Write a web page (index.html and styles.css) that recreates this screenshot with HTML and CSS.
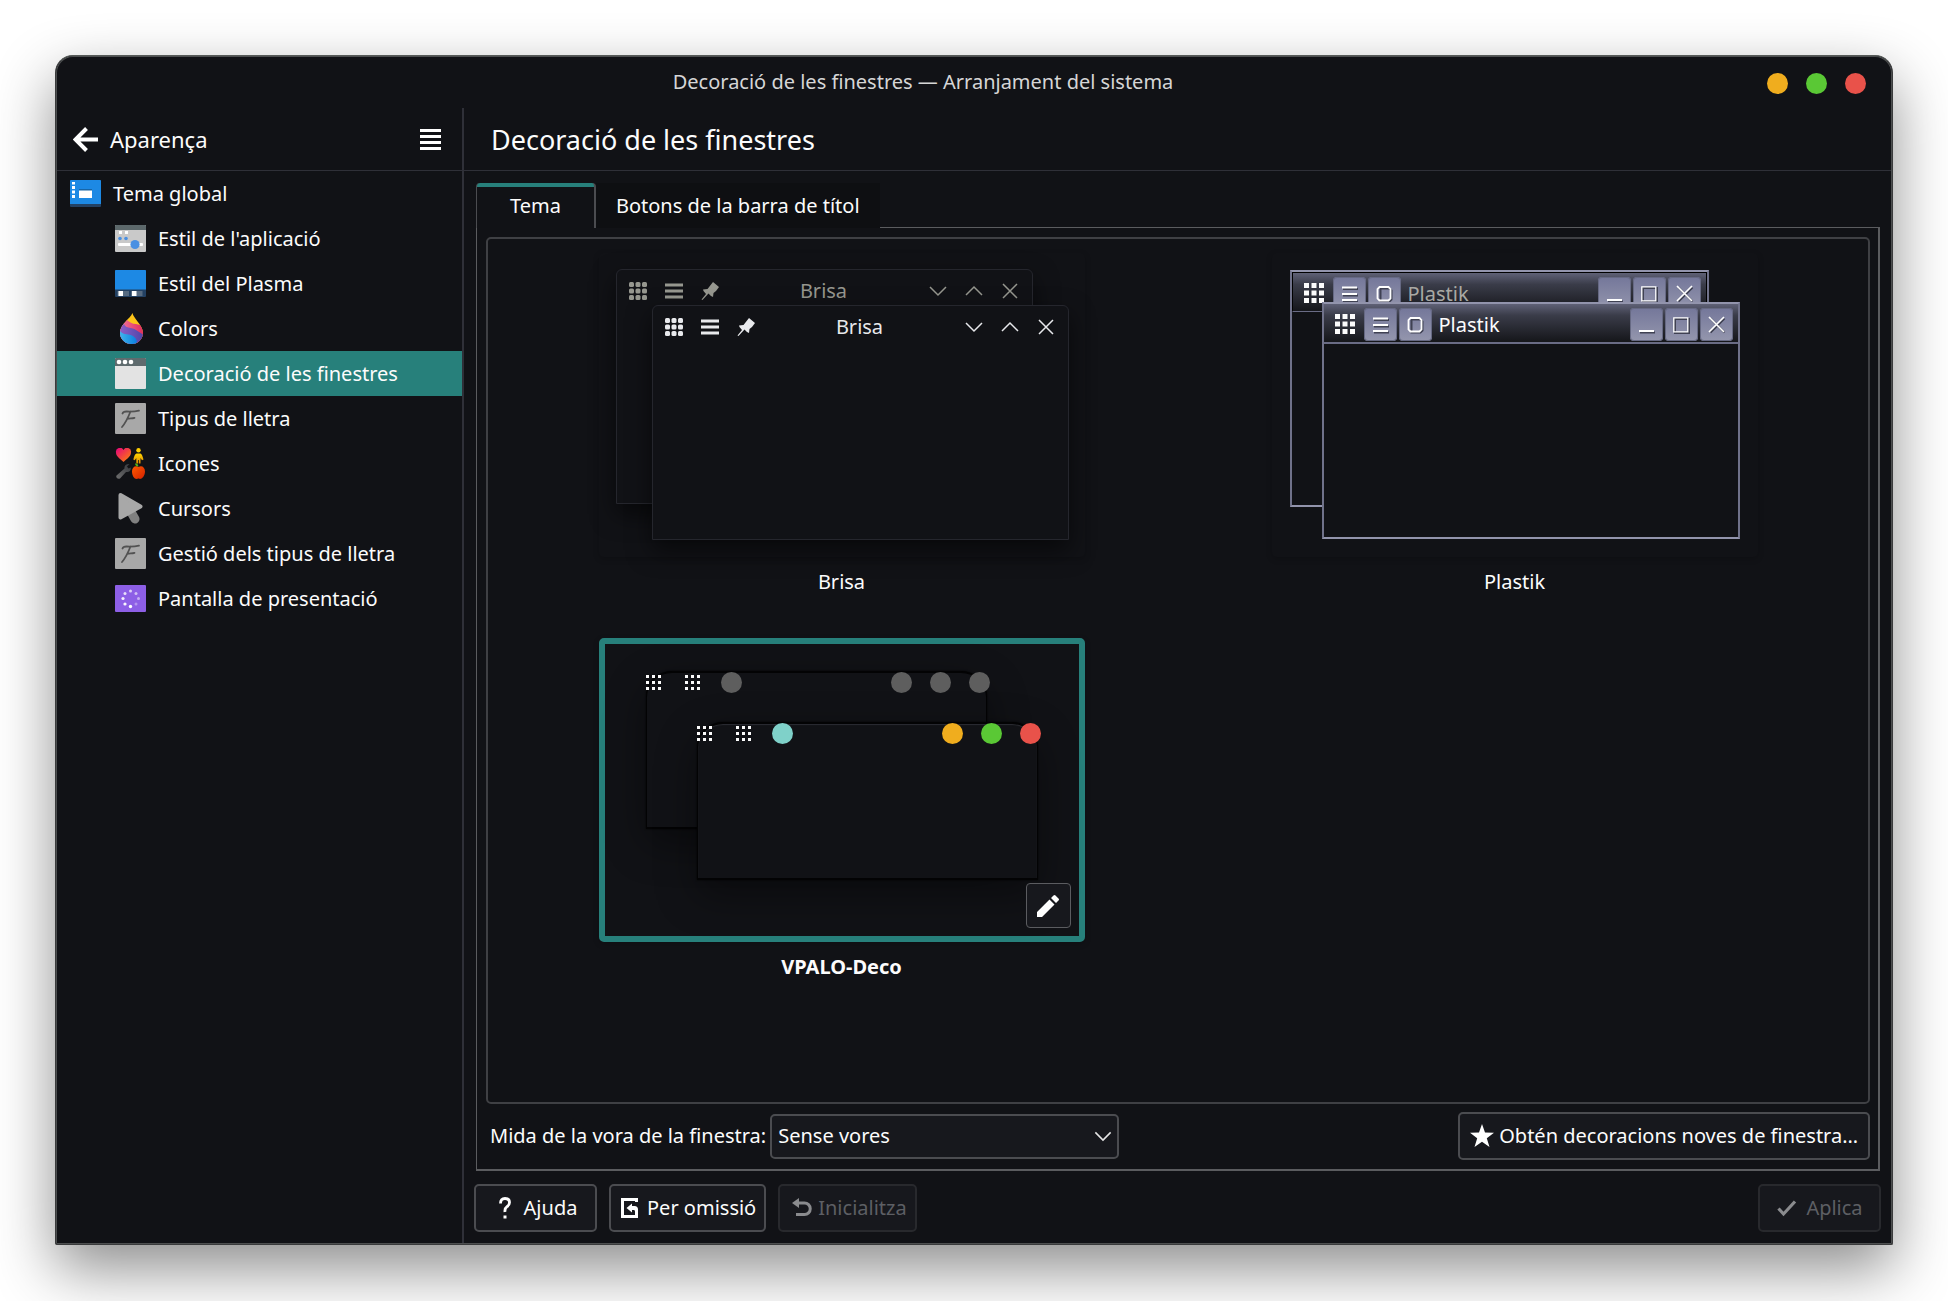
FILE: index.html
```html
<!DOCTYPE html>
<html lang="ca">
<head>
<meta charset="utf-8">
<title>Decoració de les finestres — Arranjament del sistema</title>
<meta name="viewport" content="width=device-width, initial-scale=1">
<link rel="stylesheet" href="styles.css">
</head>
<body>
<svg class="sprite" aria-hidden="true">
  <defs>
    <linearGradient id="g-heart" x1="0" y1="0" x2="1" y2="1"><stop offset="0" stop-color="#e6007e"/><stop offset="1" stop-color="#ff8a00"/></linearGradient>
    <linearGradient id="g-person" x1="0" y1="0" x2="0" y2="1"><stop offset="0" stop-color="#ffd500"/><stop offset="1" stop-color="#e08a00"/></linearGradient>
    <linearGradient id="g-wrench" x1="0" y1="1" x2="1" y2="0"><stop offset="0" stop-color="#6e6e6e"/><stop offset="1" stop-color="#33353a"/></linearGradient>
    <linearGradient id="g-apple" x1="0" y1="0" x2="1" y2="1"><stop offset="0" stop-color="#ff5a00"/><stop offset="1" stop-color="#d32000"/></linearGradient>
    <linearGradient id="g-blue" x1="0" y1="0" x2="1" y2="0"><stop offset="0" stop-color="#4fc3ee"/><stop offset="1" stop-color="#0a7fe0"/></linearGradient>
    <linearGradient id="g-violet" x1="0" y1="0" x2="1" y2="0"><stop offset="0" stop-color="#9a63cf"/><stop offset="1" stop-color="#4b45a6"/></linearGradient>
    <linearGradient id="g-pink" x1="0" y1="0" x2="1" y2="0"><stop offset="0" stop-color="#f285a8"/><stop offset="1" stop-color="#e02a5c"/></linearGradient>
    <clipPath id="c-drop"><path d="M17.500 0C18 5 28 12 28 20a11.500 11 0 0 1-23 0C5 11 15 6 17.500 0z"/></clipPath>
  </defs>
  <symbol id="i-font" viewBox="0 0 31 31">
    <rect width="31" height="31" rx="1" fill="#a8a8a8"/>
    <path d="M7.500 10.500c.5-1.500 2-2 4-2 4 .2 8 .2 12.500-.8M15.500 8.500c-2 5-4.500 11-8.500 15.500M12 16c3-1 4.500-.3 7.500-1.200" fill="none" stroke="#525252" stroke-width="1.800" stroke-linecap="round"/>
  </symbol>
  <symbol id="i-grid" viewBox="0 0 20 20"><path d="M0 0h5v5H0zM7.500 0h5v5h-5zM15 0h5v5h-5zM0 7.500h5v5H0zM7.500 7.500h5v5h-5zM15 7.500h5v5h-5zM0 15h5v5H0zM7.500 15h5v5h-5zM15 15h5v5h-5z" fill="currentColor"/></symbol>
  <symbol id="i-softgrid" viewBox="0 0 20 20"><g fill="currentColor"><rect x="1" y="1" width="5" height="5" rx="1.500"/><rect x="7.500" y="1" width="5" height="5" rx="1.500"/><rect x="14" y="1" width="5" height="5" rx="1.500"/><rect x="1" y="7.500" width="5" height="5" rx="1.500"/><rect x="7.500" y="7.500" width="5" height="5" rx="1.500"/><rect x="14" y="7.500" width="5" height="5" rx="1.500"/><rect x="1" y="14" width="5" height="5" rx="1.500"/><rect x="7.500" y="14" width="5" height="5" rx="1.500"/><rect x="14" y="14" width="5" height="5" rx="1.500"/></g></symbol>
  <symbol id="i-minigrid" viewBox="0 0 15 15"><path d="M0 0h3v3H0zM6 0h3v3H6zM12 0h3v3h-3zM0 6h3v3H0zM6 6h3v3H6zM12 6h3v3h-3zM0 12h3v3H0zM6 12h3v3H6zM12 12h3v3h-3z" fill="currentColor"/></symbol>
  <symbol id="i-bars" viewBox="0 0 20 20"><path d="M1 2.500h18v3H1zM1 8.500h18v3H1zM1 14.500h18v3H1z" fill="currentColor"/></symbol>
  <symbol id="i-pin" viewBox="0 0 20 20"><path d="M13 1l6 5-3 4-2.500 2-.5 4-2-1-2.500-2.500L2.500 19 1.500 18.500 6 13 3.500 10 3 8.500l4.500-.5z" fill="currentColor"/></symbol>
  <symbol id="i-down" viewBox="0 0 20 20"><path d="M2 6l8 8 8-8" fill="none" stroke="currentColor" stroke-width="1.500"/></symbol>
  <symbol id="i-up" viewBox="0 0 20 20"><path d="M2 14l8-8 8 8" fill="none" stroke="currentColor" stroke-width="1.500"/></symbol>
  <symbol id="i-close" viewBox="0 0 20 20"><path d="M3 3l14 14M17 3L3 17" fill="none" stroke="currentColor" stroke-width="1.500"/></symbol>
  <symbol id="p-menu" viewBox="0 0 33 33"><path d="M10 12h15M10 18.500h15M10 24.500h15" stroke="#3f4152" stroke-width="2"/><path d="M9 10.500h15M9 17h15M9 23h15" stroke="#fff" stroke-width="2"/></symbol>
  <symbol id="p-all" viewBox="0 0 33 33"><path d="M12.500 11.500h9l2 2v9l-2 2h-9z" fill="none" stroke="#3f4152" stroke-width="2"/><path d="M11.500 10h9l2 2v9.500l-2 2h-9l-2-2V12z" fill="none" stroke="#fff" stroke-width="1.800"/></symbol>
  <symbol id="p-min" viewBox="0 0 33 33"><path d="M10 24.500h15" stroke="#3f4152" stroke-width="2"/><path d="M9 23h15" stroke="#fff" stroke-width="2"/></symbol>
  <symbol id="p-max" viewBox="0 0 33 33"><path d="M10 11h14v14H10z" fill="none" stroke="#3f4152" stroke-width="2"/><path d="M8.800 9.800h14v14h-14z" fill="none" stroke="#fff" stroke-width="1.300"/></symbol>
  <symbol id="p-close" viewBox="0 0 33 33"><path d="M10.500 10.500l14 14M24.500 10.500l-14 14" stroke="#3f4152" stroke-width="2"/><path d="M9 9l15 15M24 9L9 24" stroke="#fff" stroke-width="1.700"/></symbol>
</svg>

<div class="window">
  <header class="titlebar">
    <span class="titlebar-text">Decoració de les finestres — Arranjament del sistema</span>
    <div class="titlebar-buttons">
      <button class="dot dot-yellow" type="button" aria-label="Minimitza"></button>
      <button class="dot dot-green" type="button" aria-label="Maximitza"></button>
      <button class="dot dot-red" type="button" aria-label="Tanca"></button>
    </div>
  </header>

  <div class="content">
    <aside class="sidebar">
      <div class="sidebar-head">
        <button class="back" type="button">
          <svg width="25" height="25" viewBox="0 0 25 25" aria-hidden="true"><path d="M25 12.500H3M13.500 1.500L2.500 12.500l11 11" fill="none" stroke="#fff" stroke-width="4"/></svg>
          <span>Aparença</span>
        </button>
        <button class="menu" type="button" aria-label="Menú">
          <svg width="21" height="21" viewBox="0 0 21 21" aria-hidden="true"><path d="M0 0h21v3H0zM0 6h21v3H0zM0 12h21v3H0zM0 18h21v3H0z" fill="#fff"/></svg>
        </button>
      </div>
      <nav class="nav">
        <a class="nav-item nav-parent" href="#tema-global">
          <svg class="nav-icon" viewBox="0 0 31 31" aria-hidden="true"><rect y="2" width="31" height="27" rx="1" fill="#234163"/><path d="M1 2h29a1 1 0 0 1 1 1v23H0V3a1 1 0 0 1 1-1z" fill="#1d89e4"/><path d="M2 4h3v2.500H2zM2 8h3v3H2zM2 12.500h3v3H2zM2 17h3v3H2z" fill="#fff"/><path d="M9 11h13v2H9z" fill="#1766a8"/><path d="M9 12.500h13V20H9z" fill="#fff"/></svg>
          <span>Tema global</span></a>
        <a class="nav-item" href="#estil-aplicacio">
          <svg class="nav-icon" viewBox="0 0 31 31" aria-hidden="true"><rect y="2" width="31" height="27" rx="1" fill="#c9c9c9"/><path d="M1 2h29a1 1 0 0 1 1 1v4H0V3a1 1 0 0 1 1-1z" fill="#5c686b"/><path d="M4 8h3v3H4zM10 8h3v3h-3z" fill="#fff"/><circle cx="5" cy="15.500" r="1.800" fill="#4a90e2"/><circle cx="11" cy="15.500" r="1.800" fill="#4a90e2"/><rect x="3" y="20" width="25" height="3" rx="1" fill="#fff"/><circle cx="20" cy="21.500" r="4.600" fill="#4a90e2"/></svg>
          <span>Estil de l'aplicació</span></a>
        <a class="nav-item" href="#estil-plasma">
          <svg class="nav-icon" viewBox="0 0 31 31" aria-hidden="true"><rect y="2" width="31" height="27" rx="1" fill="#234163"/><path d="M1 2h29a1 1 0 0 1 1 1v18.500H0V3a1 1 0 0 1 1-1z" fill="#1d89e4"/><path d="M2.500 23H14v5H2.500zM16 23h11.500v5H16z" fill="#566a80"/><path d="M3.500 23H8v5H3.500zM17 23h4.500v5H17z" fill="#fff"/></svg>
          <span>Estil del Plasma</span></a>
        <a class="nav-item" href="#colors">
          <svg class="nav-icon" viewBox="0 0 31 31" aria-hidden="true"><g clip-path="url(#c-drop)"><path d="M0 0h31v31H0z" fill="#fcc419"/><path d="M10 5c4 4 7 6 11 6l8 2v18H0V9z" fill="url(#g-pink)"/><path d="M0 16l9-5c2 5 8 3 12 6l8 5v9H0z" fill="url(#g-violet)"/><path d="M0 19l5-1c4 5 9 2 13 5 3 2 5 5 3 8H0z" fill="url(#g-blue)"/></g></svg>
          <span>Colors</span></a>
        <a class="nav-item nav-current" href="#decoracio" aria-current="page">
          <svg class="nav-icon" viewBox="0 0 31 31" aria-hidden="true"><rect width="31" height="31" rx="1" fill="#e3e3e3"/><path d="M1 0h29a1 1 0 0 1 1 1v7H0V1a1 1 0 0 1 1-1z" fill="#5f6b6e"/><circle cx="4" cy="4" r="2.300" fill="#fff"/><circle cx="10" cy="4" r="2.300" fill="#fff"/><circle cx="16" cy="4" r="2.300" fill="#fff"/></svg>
          <span>Decoració de les finestres</span></a>
        <a class="nav-item" href="#tipus-lletra">
          <svg class="nav-icon" aria-hidden="true"><use href="#i-font"/></svg>
          <span>Tipus de lletra</span></a>
        <a class="nav-item" href="#icones">
          <svg class="nav-icon" viewBox="0 0 31 31" aria-hidden="true"><path d="M8.500 14C4 10 1 8 1 4.500A4 4 0 0 1 8.500 2 4 4 0 0 1 16 4.500C16 8 13 10 8.500 14z" fill="url(#g-heart)"/><circle cx="23.500" cy="2.200" r="2.200" fill="#ffcf00"/><path d="M21.500 5.500h4c1.500.5 2 3 3 6l-1.500.8-1.500-2.300v5.500h-1.700v-3.500h-.8v3.500h-1.700v-5.500l-1.500 2.300-1.500-.8c1-3 1.500-5.500 3.200-6z" fill="url(#g-person)"/><path d="M1.500 27.500l8-7c-.5-3 2-5 5-4.500L12 18.500l1.500 2 2.500-1c0 3.500-2 5-5 4.500l-6 6.500c-2.500 1-4.500-1-3.500-3z" fill="url(#g-wrench)"/><path d="M20 15.500c2-.5 3 .5 3.500 3-2 .2-3.300-.8-3.500-3z" fill="#4db31a"/><path d="M23.500 19c3-2 6.500 0 6.500 4.500S27 31 25 31c-1 0-1-.4-1.500-.4s-.8.4-2 .4C19.500 31 17 28 17 23.500S20.500 17 23.500 19z" fill="url(#g-apple)"/></svg>
          <span>Icones</span></a>
        <a class="nav-item" href="#cursors">
          <svg class="nav-icon" viewBox="0 0 31 31" aria-hidden="true"><path d="M16 19l4 7" stroke="#808080" stroke-width="9" stroke-linecap="round"/><path d="M5.500 2l20 11.500L5.500 24.500z" fill="#a8a8a8" stroke="#a8a8a8" stroke-width="4" stroke-linejoin="round"/></svg>
          <span>Cursors</span></a>
        <a class="nav-item" href="#gestio-tipus">
          <svg class="nav-icon" aria-hidden="true"><use href="#i-font"/></svg>
          <span>Gestió dels tipus de lletra</span></a>
        <a class="nav-item" href="#presentacio">
          <svg class="nav-icon" viewBox="0 0 31 31" aria-hidden="true"><rect y="2" width="31" height="27" rx="1" fill="#8d5fe6"/><g fill="#fff"><circle cx="15.500" cy="23.500" r="1.700"/><circle cx="10" cy="21" r="1.600" opacity=".95"/><circle cx="8" cy="15.500" r="1.600" opacity=".9"/><circle cx="10" cy="10.500" r="1.500" opacity=".8"/><circle cx="15.500" cy="8" r="1.500" opacity=".7"/><circle cx="21" cy="10.500" r="1.500" opacity=".6"/><circle cx="23.500" cy="15.500" r="1.500" opacity=".5"/><circle cx="21" cy="21" r="1.500" opacity=".35"/></g></svg>
          <span>Pantalla de presentació</span></a>
      </nav>
    </aside>

    <main class="main">
      <h1 class="page-title">Decoració de les finestres</h1>

      <div class="tabs" role="tablist">
        <button class="tab tab-active" type="button" role="tab" aria-selected="true">Tema</button>
        <button class="tab" type="button" role="tab" aria-selected="false">Botons de la barra de títol</button>
      </div>

      <section class="panel" role="tabpanel">
        <div class="themes">
          <figure class="theme">
            <div class="card">
              <div class="mini brisa mini-back">
                <div class="mini-bar">
                  <span class="slot"><svg width="20" height="20"><use href="#i-softgrid"/></svg></span>
                  <span class="slot"><svg width="20" height="20"><use href="#i-bars"/></svg></span>
                  <span class="slot"><svg width="20" height="20"><use href="#i-pin"/></svg></span>
                  <span class="mini-title">Brisa</span>
                  <span class="slot"><svg width="20" height="20"><use href="#i-down"/></svg></span>
                  <span class="slot"><svg width="20" height="20"><use href="#i-up"/></svg></span>
                  <span class="slot"><svg width="20" height="20"><use href="#i-close"/></svg></span>
                </div>
              </div>
              <div class="mini brisa mini-front">
                <div class="mini-bar">
                  <span class="slot"><svg width="20" height="20"><use href="#i-softgrid"/></svg></span>
                  <span class="slot"><svg width="20" height="20"><use href="#i-bars"/></svg></span>
                  <span class="slot"><svg width="20" height="20"><use href="#i-pin"/></svg></span>
                  <span class="mini-title">Brisa</span>
                  <span class="slot"><svg width="20" height="20"><use href="#i-down"/></svg></span>
                  <span class="slot"><svg width="20" height="20"><use href="#i-up"/></svg></span>
                  <span class="slot"><svg width="20" height="20"><use href="#i-close"/></svg></span>
                </div>
              </div>
            </div>
            <figcaption>Brisa</figcaption>
          </figure>

          <figure class="theme">
            <div class="card">
              <div class="mini plastik mini-back">
                <div class="mini-bar">
                  <span class="app"><svg width="20" height="20"><use href="#i-grid"/></svg></span>
                  <span class="key"><svg width="33" height="33"><use href="#p-menu"/></svg></span>
                  <span class="key"><svg width="33" height="33"><use href="#p-all"/></svg></span>
                  <span class="mini-title">Plastik</span>
                  <span class="key"><svg width="33" height="33"><use href="#p-min"/></svg></span>
                  <span class="key"><svg width="33" height="33"><use href="#p-max"/></svg></span>
                  <span class="key"><svg width="33" height="33"><use href="#p-close"/></svg></span>
                </div>
              </div>
              <div class="mini plastik mini-front">
                <div class="mini-bar">
                  <span class="app"><svg width="20" height="20"><use href="#i-grid"/></svg></span>
                  <span class="key"><svg width="33" height="33"><use href="#p-menu"/></svg></span>
                  <span class="key"><svg width="33" height="33"><use href="#p-all"/></svg></span>
                  <span class="mini-title">Plastik</span>
                  <span class="key"><svg width="33" height="33"><use href="#p-min"/></svg></span>
                  <span class="key"><svg width="33" height="33"><use href="#p-max"/></svg></span>
                  <span class="key"><svg width="33" height="33"><use href="#p-close"/></svg></span>
                </div>
              </div>
            </div>
            <figcaption>Plastik</figcaption>
          </figure>

          <figure class="theme theme-selected">
            <div class="card">
              <div class="mini vpalo mini-back">
                <div class="mini-bar">
                  <span class="slot"><svg width="15" height="15"><use href="#i-minigrid"/></svg></span>
                  <span class="slot"><svg width="15" height="15"><use href="#i-minigrid"/></svg></span>
                  <span class="slot"><i class="dot"></i></span>
                  <span class="spacer"></span>
                  <span class="slot"><i class="dot"></i></span>
                  <span class="slot"><i class="dot"></i></span>
                  <span class="slot"><i class="dot"></i></span>
                </div>
              </div>
              <div class="mini vpalo mini-front">
                <div class="mini-bar">
                  <span class="slot"><svg width="15" height="15"><use href="#i-minigrid"/></svg></span>
                  <span class="slot"><svg width="15" height="15"><use href="#i-minigrid"/></svg></span>
                  <span class="slot"><i class="dot dot-aqua"></i></span>
                  <span class="spacer"></span>
                  <span class="slot"><i class="dot dot-yellow"></i></span>
                  <span class="slot"><i class="dot dot-green"></i></span>
                  <span class="slot"><i class="dot dot-red"></i></span>
                </div>
              </div>
              <button class="edit" type="button" aria-label="Edita">
                <svg width="22" height="22" viewBox="0 0 22 22" aria-hidden="true"><path d="M0 17L12.500 4.500l5 5L5 22H0zM14 3l2.500-2.500q1-1 2 0l3 3q1 1 0 2L19 8z" fill="#fff"/></svg>
              </button>
            </div>
            <figcaption>VPALO-Deco</figcaption>
          </figure>
        </div>

        <div class="options">
          <label for="border-size">Mida de la vora de la finestra:</label>
          <div class="combo">
            <select id="border-size"><option>Sense vores</option></select>
            <svg class="combo-arrow" width="18" height="18" viewBox="0 0 20 20" aria-hidden="true"><path d="M1.500 6l8.500 8.500L18.500 6" fill="none" stroke="#e6e6e6" stroke-width="1.700"/></svg>
          </div>
          <button class="btn btn-get" type="button">
            <svg width="24" height="24" viewBox="0 0 24 24" aria-hidden="true"><path d="M12 0l3 8.500 9 .2-7.200 5.500L19.500 23 12 17.800 4.500 23l2.700-8.800L0 8.700l9-.2z" fill="#fff"/></svg>
            <span>Obtén decoracions noves de finestra…</span>
          </button>
        </div>
      </section>

      <footer class="actions">
        <button class="btn btn-short" type="button">
          <svg width="22" height="22" viewBox="0 0 22 22" aria-hidden="true"><path d="M6.500 6.500Q6.500 1.500 11 1.500t4.500 4q0 2.500-2.500 4.200T11 15" fill="none" stroke="#fff" stroke-width="2.800"/><path d="M9.500 18.500h3v3h-3z" fill="#fff"/></svg>
          <span>Ajuda</span>
        </button>
        <button class="btn" type="button">
          <svg width="22" height="22" viewBox="0 0 22 22" aria-hidden="true"><path d="M17.500 5V2.500h-14v17h14V18" fill="none" stroke="#fff" stroke-width="3"/><path d="M13 6.500V9h2.500q3.500 0 3.500 3.500V18h-3v-3.500q0-1.500-1-1.500h-2v2.500L7.500 11z" fill="#fff"/></svg>
          <span>Per omissió</span>
        </button>
        <button class="btn" type="button" disabled>
          <svg width="24" height="20" viewBox="-4 0 24 20" aria-hidden="true"><path d="M4 5h8.500a5.500 5.500 0 0 1 0 11.500H4" fill="none" stroke="#8a8b8e" stroke-width="3"/><path d="M7 0v10L0 5z" fill="#8a8b8e"/></svg>
          <span>Inicialitza</span>
        </button>
        <button class="btn btn-short btn-apply" type="button" disabled>
          <svg width="22" height="22" viewBox="0 0 22 22" aria-hidden="true"><path d="M2.500 11.500l5 5.500L19 4.500" fill="none" stroke="#8a8b8e" stroke-width="3.200"/></svg>
          <span>Aplica</span>
        </button>
      </footer>
    </main>
  </div>
</div>
</body>
</html>
```
FILE: styles.css
```css
:root {
  --bg: #111216;
  --tab-bg: #0e0f12;
  --field: #17181d;
  --line: #2f3038;
  --frame: #4b4c50;
  --accent: #27807b;
  --text: #fcfcfc;
}

* { box-sizing: border-box; }

body {
  margin: 0;
  min-height: 100vh;
  padding: 55px 55px 56px;
  display: flex;
  background: #fff;
  color: var(--text);
  font: 20px/28px "Noto Sans", sans-serif;
}

button, select { font: inherit; color: inherit; }
button { padding: 0; border: 0; background: none; }
svg { display: block; flex: none; }
.sprite { position: absolute; width: 0; height: 0; }

.window {
  flex: 1;
  min-width: 0;
  display: flex;
  flex-direction: column;
  background: var(--bg);
  border: 1px solid #3a3b3c;
  border-top-color: #565a58;
  border-radius: 18px 18px 2px 2px;
  padding: 1px;
  box-shadow: inset 0 0 0 1px #4d4f50, 0 24px 60px rgba(0, 0, 0, .45);
}

/* Title bar */
.titlebar {
  height: 51px;
  padding: 0 25px 0 22px;
  display: flex;
  align-items: center;
}
.titlebar-text { flex: 1; padding-bottom: 2px; text-align: center; color: #d6d6d6; }
.titlebar-buttons { display: flex; gap: 18px; padding-top: 2px; }
.dot {
  display: block;
  width: 21px;
  height: 21px;
  border-radius: 50%;
  background: #5e5e5e;
}
.dot-yellow { background: #f0ad1e; }
.dot-green { background: #5ac835; }
.dot-red { background: #e9524a; }
.dot-aqua { background: #7fd1c9; }

.content { flex: 1; display: flex; min-height: 0; }

/* Sidebar */
.sidebar { width: 407px; flex: none; border-right: 2px solid var(--line); }
.sidebar-head {
  height: 63px;
  padding: 0 21px 0 16px;
  display: flex;
  align-items: center;
  justify-content: space-between;
  border-bottom: 1px solid var(--line);
}
.back { display: flex; align-items: center; gap: 12px; font-size: 22px; }
.nav { display: flex; flex-direction: column; }
.nav-item {
  height: 45px;
  padding-left: 58px;
  display: flex;
  align-items: center;
  gap: 12px;
  color: inherit;
  text-decoration: none;
  white-space: nowrap;
}
.nav-parent { padding-left: 13px; }
.nav-current { background: var(--accent); }
.nav-icon { width: 31px; height: 31px; }

/* Main column */
.main { flex: 1; min-width: 0; display: flex; flex-direction: column; }
.page-title {
  height: 63px;
  margin: 0;
  padding: 0 27px;
  border-bottom: 1px solid var(--line);
  font-size: 27px;
  font-weight: 400;
  line-height: 63px;
}

.tabs { display: flex; margin: 12px 12px -1px; position: relative; }
.tab { height: 45px; padding: 0 20px; background: var(--tab-bg); }
.tab-active {
  padding: 0 33px;
  background: linear-gradient(var(--accent) 4px, var(--bg) 4px);
  border: 1px solid var(--frame);
  border-width: 0 2px 0 1px;
  border-radius: 4px 4px 0 0;
}

.panel {
  flex: 1;
  margin: 0 11px 0 12px;
  padding: 9px 8px 9px 9px;
  display: flex;
  flex-direction: column;
  gap: 8px;
  border: 1px solid #5b5c5f;
  border-width: 1px 2px 2px 1px;
}

.themes {
  flex: 1;
  padding: 14px 17px;
  display: grid;
  grid-template-columns: repeat(auto-fit, minmax(486px, 1fr));
  grid-auto-rows: 385px;
  align-content: start;
  border: 2px solid #3f4044;
  border-radius: 5px;
}
.theme { margin: 0; display: flex; flex-direction: column; align-items: center; }
.theme figcaption { margin-top: 11px; }
.theme-selected figcaption { font-weight: 700; }
.card {
  position: relative;
  width: 486px;
  height: 304px;
  border: 6px solid transparent;
  border-radius: 5px;
  box-shadow: 0 2px 6px rgba(0, 0, 0, .2);
}
.theme-selected .card { border-color: var(--accent); }

/* Miniature windows, stacked freely on each card */
.mini { position: absolute; background: var(--bg); }
.mini-bar { display: flex; align-items: center; }
.mini-title { flex: 1; }
.slot { display: flex; justify-content: center; align-items: center; flex: none; }
.spacer { flex: 1; }

.brisa {
  width: 417px;
  height: 235px;
  border: 1px solid #25262d;
  border-radius: 6px 6px 0 0;
  box-shadow: 0 10px 24px rgba(0, 0, 0, .55);
}
.brisa.mini-back { left: 11px; top: 10px; color: #96978f; }
.brisa.mini-front { left: 47px; top: 46px; color: #e8e9ec; }
.brisa .mini-bar { height: 41px; padding: 0 4px 0 3px; }
.brisa .slot { width: 36px; }
.brisa .mini-title { text-align: center; }

.plastik {
  width: 418px;
  height: 237px;
  border: 2px solid #70728a;
  border-color: #9294ac #70728a #9294ac #70728a;
}
.plastik.mini-back { left: 12px; top: 11px; width: 419px; }
.plastik.mini-front { left: 44px; top: 43px; }
.plastik .mini-bar {
  height: 40px;
  padding: 2px 5px 0 11px;
  gap: 2px;
  background: linear-gradient(#5f6176, #3a3c49 30%, #15161a);
  border-bottom: 2px solid #6a6c85;
}
.plastik.mini-back .mini-bar { border: 1px solid #000; border-bottom: 1px solid #6a6c85; padding: 2px 5px 0 11px; }
.plastik .app { margin-right: 7px; }
.plastik .mini-title { padding: 2px 0 0 5px; }
.plastik.mini-back .mini-title { color: #a9a9a4; }
.key {
  width: 33px;
  height: 33px;
  border-radius: 4px;
  background: linear-gradient(#74779a, #9496ad);
  box-shadow: inset 0 0 0 1px #666983;
}

.vpalo {
  width: 341px;
  height: 158px;
  border: 1px solid #030304;
  border-width: 2px 1px;
  border-radius: 26px 26px 0 0;
  box-shadow: 0 0 2px #000, 0 14px 40px rgba(0, 0, 0, .4);
}
.vpalo.mini-back { left: 41px; top: 27px; }
.vpalo.mini-front { left: 92px; top: 78px; box-shadow: inset 0 1px 1px #2c2d33, 0 0 2px #000, 0 14px 40px rgba(0, 0, 0, .4); }
.vpalo .mini-bar { height: 21px; margin: -1px -13px 0; }
.vpalo .slot { width: 39px; }

.edit {
  position: absolute;
  right: 8px;
  bottom: 8px;
  width: 45px;
  height: 45px;
  display: grid;
  place-items: center;
  background: var(--field);
  border: 1px solid #5b5c60;
  border-radius: 4px;
}

/* Controls */
.options { display: flex; align-items: center; gap: 4px; padding-left: 4px; }
.combo { display: grid; align-items: center; width: 349px; }
.combo select {
  grid-area: 1 / 1;
  width: 100%;
  height: 45px;
  padding: 0 36px 0 6px;
  appearance: none;
  background: var(--field);
  border: 2px solid var(--frame);
  border-radius: 5px;
}
.combo-arrow { grid-area: 1 / 1; justify-self: end; margin-right: 7px; pointer-events: none; }

.btn {
  height: 48px;
  padding: 0 8px;
  display: flex;
  align-items: center;
  justify-content: center;
  gap: 6px;
  background: var(--field);
  border: 2px solid var(--frame);
  border-radius: 5px;
  white-space: nowrap;
}
.btn:disabled { border-color: #28292d; color: #5d5f64; }
.btn-get { margin-left: auto; padding: 0 10px; gap: 5px; }
.btn-short { min-width: 123px; gap: 8px; }
.actions { display: flex; gap: 12px; padding: 13px 10px 11px; }
.btn-apply { margin-left: auto; }
```
